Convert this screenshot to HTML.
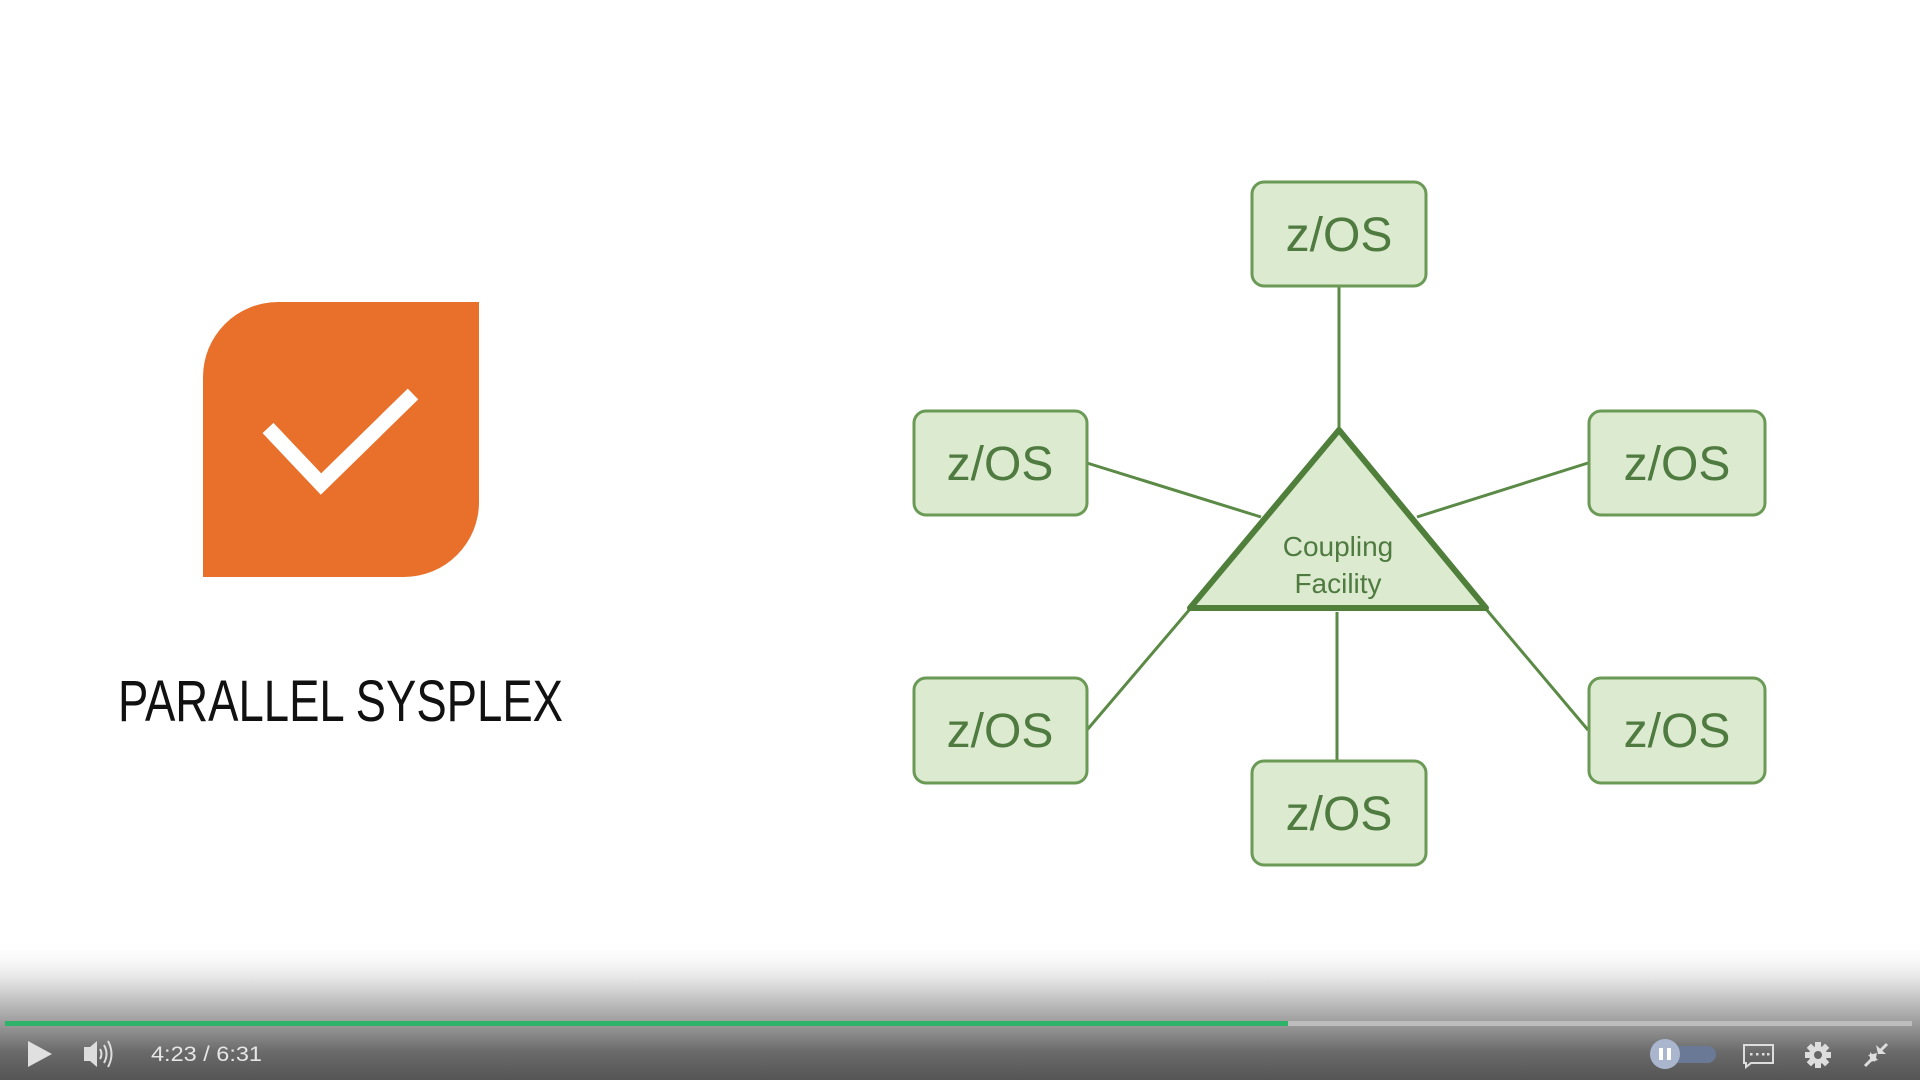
<!DOCTYPE html>
<html><head><style>
html,body{margin:0;padding:0;width:1920px;height:1080px;overflow:hidden;background:#fff}
svg{display:block}
</style></head><body>
<svg width="1920" height="1080" viewBox="0 0 1920 1080" xmlns="http://www.w3.org/2000/svg">
<defs>
<linearGradient id="g" x1="0" y1="0" x2="0" y2="1">
<stop offset="0" stop-color="#fff" stop-opacity="0"/>
<stop offset="0.3" stop-color="#e0e0e0"/>
<stop offset="0.6" stop-color="#9a9a9a"/>
<stop offset="0.8" stop-color="#6a6a6a"/>
<stop offset="1" stop-color="#555"/>
</linearGradient>
</defs>
<rect width="1920" height="1080" fill="#fff"/>
<path d="M278 302 H479 V502 A75 75 0 0 1 404 577 H203 V377 A75 75 0 0 1 278 302 Z" fill="#e8702a"/>
<polyline points="268,428 321,484 413,394" fill="none" stroke="#fff" stroke-width="15"/>
<text x="118" y="721" font-family="Liberation Sans, sans-serif" font-size="58" fill="#111" textLength="445" lengthAdjust="spacingAndGlyphs">PARALLEL SYSPLEX</text>
<g stroke="#5a8a45" stroke-width="3" fill="none">
<line x1="1339" y1="287" x2="1339" y2="430"/>
<line x1="1087" y1="463" x2="1261" y2="517"/>
<line x1="1588" y1="463" x2="1417" y2="517"/>
<line x1="1087" y1="730" x2="1190" y2="609"/>
<line x1="1588" y1="730" x2="1486" y2="609"/>
<line x1="1337" y1="612" x2="1337" y2="760"/>
</g>
<polygon points="1339,430 1190,608 1486,608" fill="#dcebd0" stroke="#4f7f3a" stroke-width="6" stroke-linejoin="round"/>
<g font-family="Liberation Sans, sans-serif" fill="#4f7a40" text-anchor="middle">
<text x="1338" y="556" font-size="28">Coupling</text>
<text x="1338" y="593" font-size="28">Facility</text>
</g>
<g fill="#dcebd0" stroke="#6a9a55" stroke-width="3">
<rect x="1252" y="182" width="174" height="104" rx="12"/>
<rect x="914" y="411" width="173" height="104" rx="12"/>
<rect x="1589" y="411" width="176" height="104" rx="12"/>
<rect x="914" y="678" width="173" height="105" rx="12"/>
<rect x="1589" y="678" width="176" height="105" rx="12"/>
<rect x="1252" y="761" width="174" height="104" rx="12"/>
</g>
<g font-family="Liberation Sans, sans-serif" font-size="48" fill="#4f7a40" text-anchor="middle">
<text x="1339" y="251">z/OS</text>
<text x="1000" y="480">z/OS</text>
<text x="1677" y="480">z/OS</text>
<text x="1000" y="747">z/OS</text>
<text x="1677" y="747">z/OS</text>
<text x="1339" y="830">z/OS</text>
</g>
<rect x="0" y="940" width="1920" height="140" fill="url(#g)"/>
<rect x="5" y="1021" width="1907" height="5" fill="#bdbdbd"/>
<rect x="5" y="1021" width="1283" height="5" fill="#2fb36a"/>
<polygon points="28,1041 52,1054 28,1067" fill="#e0e0e0"/>
<path d="M84 1047 H90 L97 1041 V1067 L90 1061 H84 Z" fill="#ddd"/>
<path d="M100 1049 Q103 1054 100 1059 M104 1045 Q109 1054 104 1063 M108 1041 Q115 1054 108 1067" fill="none" stroke="#ddd" stroke-width="2"/>
<text x="151" y="1061" font-family="Liberation Sans, sans-serif" font-size="21" fill="#e6e6e6" textLength="111" lengthAdjust="spacingAndGlyphs">4:23  /  6:31</text>
<rect x="1652" y="1046" width="64" height="17" rx="8.5" fill="#6a7a96"/>
<circle cx="1665" cy="1054" r="15" fill="#a9b6cd"/>
<rect x="1659" y="1048" width="4" height="12" fill="#fff"/>
<rect x="1667" y="1048" width="4" height="12" fill="#fff"/>
<path d="M1744 1045 H1773 V1063 H1751 L1746 1067 V1063 H1744 Z" fill="none" stroke="#ddd" stroke-width="2"/>
<g fill="#ddd"><rect x="1750" y="1053" width="2.5" height="2.5"/><rect x="1756" y="1053" width="2.5" height="2.5"/><rect x="1762" y="1053" width="2.5" height="2.5"/><rect x="1767" y="1053" width="2.5" height="2.5"/></g>
<g transform="translate(1818,1055)">
<g fill="#ddd">
<circle r="9"/>
<rect x="-3" y="-13" width="6" height="26"/>
<rect x="-3" y="-13" width="6" height="26" transform="rotate(45)"/>
<rect x="-3" y="-13" width="6" height="26" transform="rotate(90)"/>
<rect x="-3" y="-13" width="6" height="26" transform="rotate(135)"/>
</g>
<circle r="4" fill="#666"/>
</g>
<g stroke="#ddd" stroke-width="3" fill="#ddd">
<line x1="1865" y1="1066" x2="1872" y2="1059"/>
<polygon points="1870,1052 1878,1060 1870,1062" stroke="none"/>
<polygon points="1868,1055 1877,1053 1875,1062" stroke="none"/>
<line x1="1887" y1="1044" x2="1880" y2="1051"/>
<polygon points="1876,1045 1878,1054 1886,1054" stroke="none"/>
</g>
</svg>
</body></html>
